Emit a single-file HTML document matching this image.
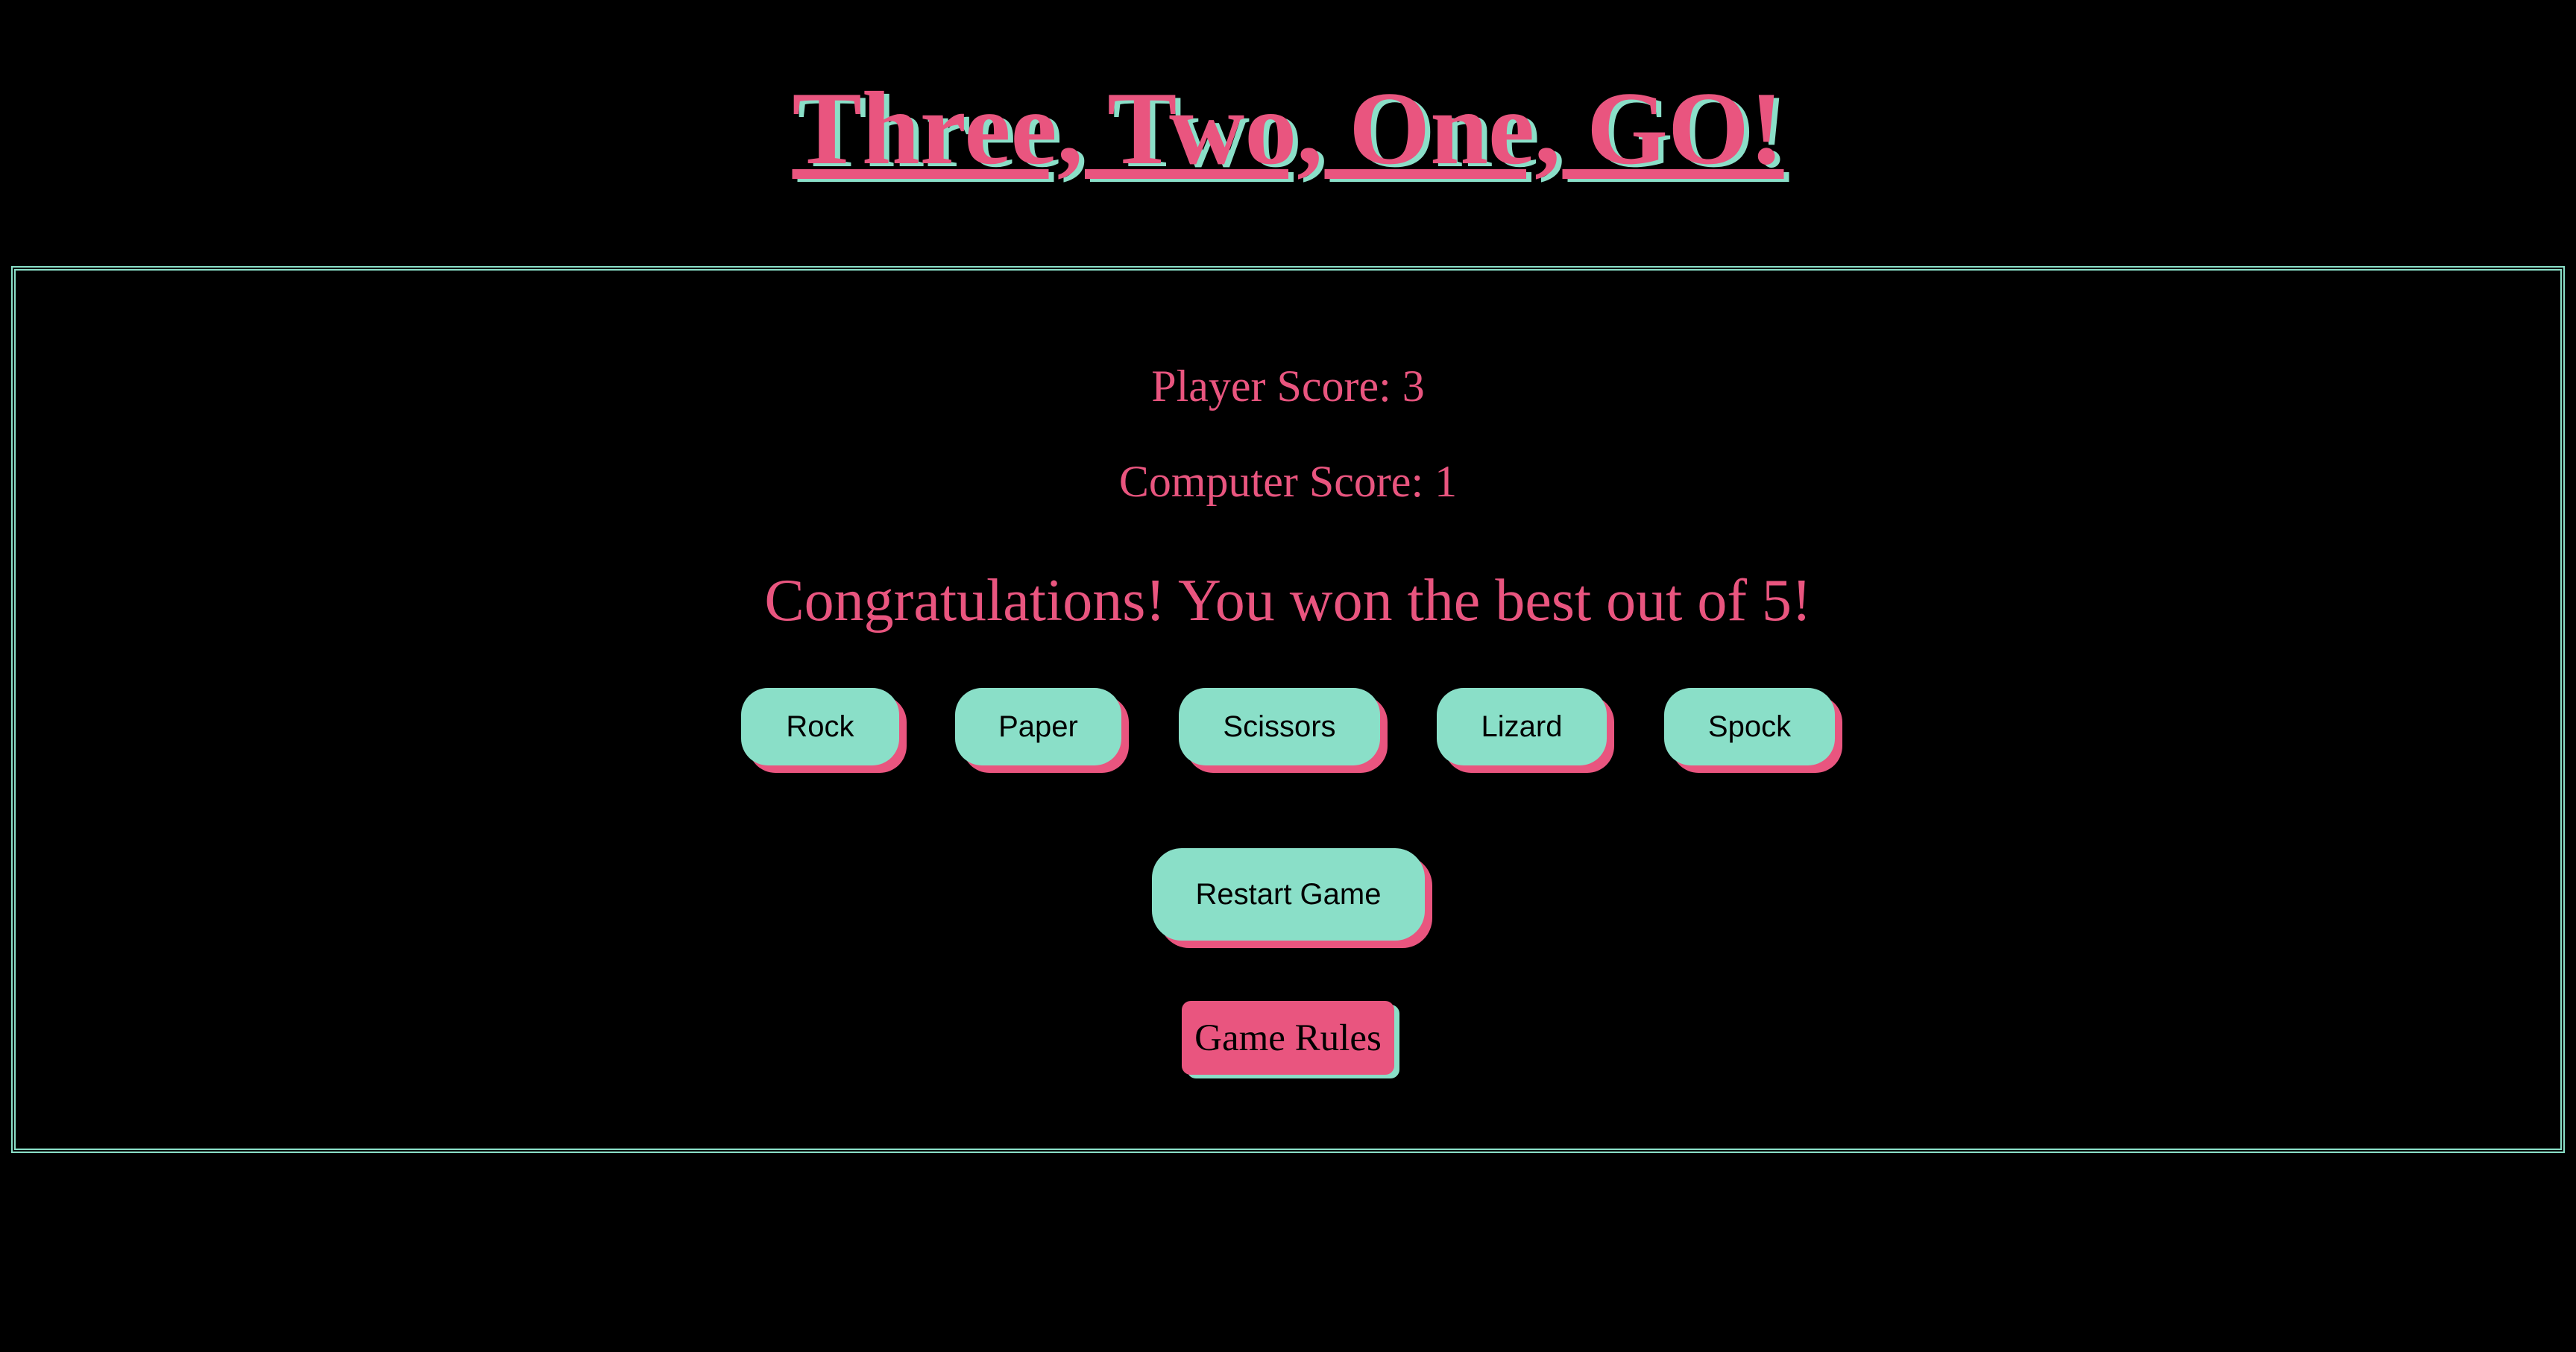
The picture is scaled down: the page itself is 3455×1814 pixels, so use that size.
<!DOCTYPE html>
<html><head><meta charset="utf-8"><style>
html,body{margin:0;padding:0;background:#000;width:3455px;height:1814px;overflow:hidden;position:relative;font-family:"Liberation Serif",serif;}
h1{position:absolute;left:0;width:3455px;top:82px;margin:0;text-align:center;font:bold 140px/1.3 "Liberation Serif",serif;color:#e9557f;text-decoration:underline;text-decoration-thickness:13px;text-underline-offset:8px;text-shadow:7px 4px 0 #8adfc8;}
.box{position:absolute;left:15px;top:357px;width:3413px;height:1178px;border:6px double #8adfc8;}
.t{position:absolute;left:0;width:3455px;text-align:center;color:#e9557f;margin:0}
.btn{position:absolute;box-sizing:border-box;background:#8adfc8;color:#000;font:40px "Liberation Sans",sans-serif;display:flex;align-items:center;justify-content:center;border-radius:36px;box-shadow:10px 10px 0 #e9557f;}
.rules{position:absolute;box-sizing:border-box;background:#e9557f;color:#000;font:51px "Liberation Serif",serif;display:flex;align-items:center;justify-content:center;border-radius:12px;box-shadow:7px 5px 0 #8adfc8;}
</style></head><body>
<h1>Three, Two, One, GO!</h1>
<div class="box"></div>
<p class="t" style="top:482px;font-size:60px;line-height:72px">Player Score: 3</p>
<p class="t" style="top:610px;font-size:60px;line-height:72px">Computer Score: 1</p>
<p class="t" style="top:758px;font-size:80px;line-height:96px">Congratulations! You won the best out of 5!</p>
<div class="btn" style="left:994px;top:923px;width:212px;height:104px">Rock</div>
<div class="btn" style="left:1281px;top:923px;width:223px;height:104px">Paper</div>
<div class="btn" style="left:1581px;top:923px;width:270px;height:104px">Scissors</div>
<div class="btn" style="left:1927px;top:923px;width:228px;height:104px">Lizard</div>
<div class="btn" style="left:2232px;top:923px;width:229px;height:104px">Spock</div>
<div class="btn" style="left:1545px;top:1138px;width:366px;height:124px;border-radius:40px">Restart Game</div>
<div class="rules" style="left:1585px;top:1343px;width:285px;height:99px">Game Rules</div>
</body></html>
